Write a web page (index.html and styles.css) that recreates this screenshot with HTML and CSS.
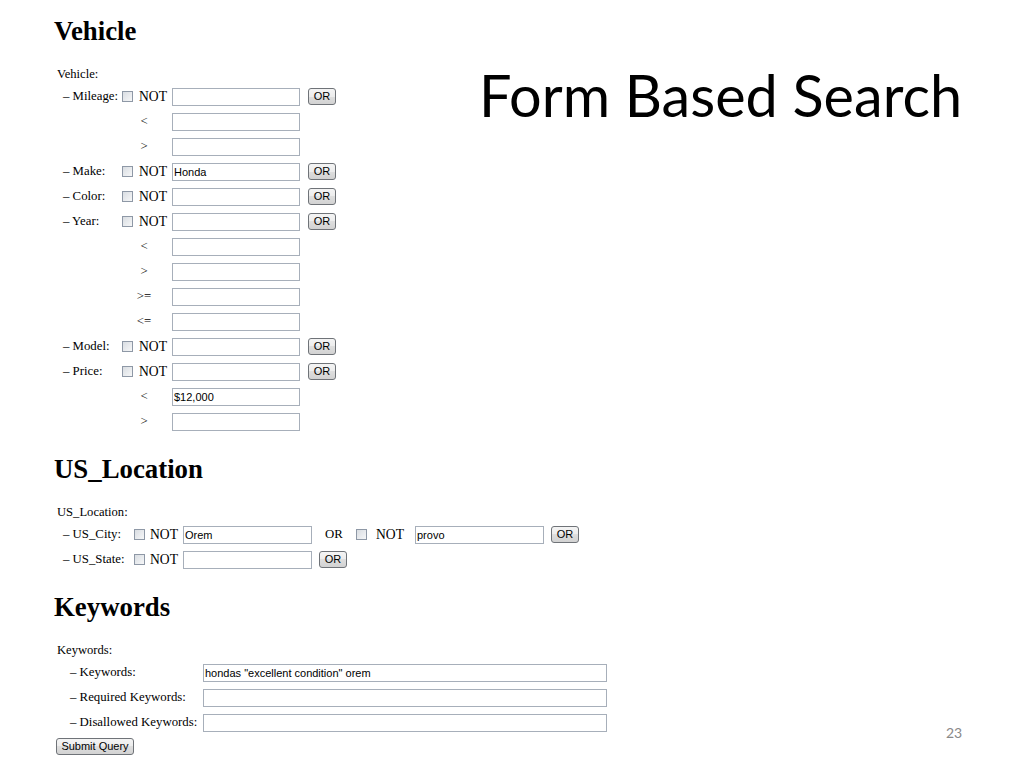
FILE: index.html
```html
<html>
    <meta http-equiv="content-type" content="text/html; charset=utf-8" />
    <head>
        <link rel="stylesheet" href="styles.css">
        <title>Form Based Search</title>
    </head>
    <body>
        <div class="slide">
            <form class="qform">
                <h2>Vehicle</h2>
                <div class="group-label">Vehicle:</div>
                <div class="rows">
                    <div class="row"><span class="lbl v">&ndash; Mileage:</span><input type="checkbox" class="chk"><span class="not v">NOT</span><input type="text" class="txt"><input type="button" class="btn or v" value="OR"></div>
                    <div class="row"><span class="lbl v"></span><span class="op">&lt;</span><input type="text" class="txt"></div>
                    <div class="row"><span class="lbl v"></span><span class="op">&gt;</span><input type="text" class="txt"></div>
                    <div class="row"><span class="lbl v">&ndash; Make:</span><input type="checkbox" class="chk"><span class="not v">NOT</span><input type="text" class="txt" value="Honda"><input type="button" class="btn or v" value="OR"></div>
                    <div class="row"><span class="lbl v">&ndash; Color:</span><input type="checkbox" class="chk"><span class="not v">NOT</span><input type="text" class="txt"><input type="button" class="btn or v" value="OR"></div>
                    <div class="row"><span class="lbl v">&ndash; Year:</span><input type="checkbox" class="chk"><span class="not v">NOT</span><input type="text" class="txt"><input type="button" class="btn or v" value="OR"></div>
                    <div class="row"><span class="lbl v"></span><span class="op">&lt;</span><input type="text" class="txt"></div>
                    <div class="row"><span class="lbl v"></span><span class="op">&gt;</span><input type="text" class="txt"></div>
                    <div class="row"><span class="lbl v"></span><span class="op">&gt;=</span><input type="text" class="txt"></div>
                    <div class="row"><span class="lbl v"></span><span class="op">&lt;=</span><input type="text" class="txt"></div>
                    <div class="row"><span class="lbl v">&ndash; Model:</span><input type="checkbox" class="chk"><span class="not v">NOT</span><input type="text" class="txt"><input type="button" class="btn or v" value="OR"></div>
                    <div class="row"><span class="lbl v">&ndash; Price:</span><input type="checkbox" class="chk"><span class="not v">NOT</span><input type="text" class="txt"><input type="button" class="btn or v" value="OR"></div>
                    <div class="row"><span class="lbl v"></span><span class="op">&lt;</span><input type="text" class="txt" value="$12,000"></div>
                    <div class="row"><span class="lbl v"></span><span class="op">&gt;</span><input type="text" class="txt"></div>
                </div>

                <h2>US_Location</h2>
                <div class="group-label">US_Location:</div>
                <div class="rows">
                    <div class="row"><span class="lbl us">&ndash; US_City:</span><input type="checkbox" class="chk us"><span class="not us">NOT</span><input type="text" class="txt us" value="Orem"><span class="or-text">OR</span><input type="checkbox" class="chk us2"><span class="not us2">NOT</span><input type="text" class="txt us" value="provo"><input type="button" class="btn or us" value="OR"></div>
                    <div class="row"><span class="lbl us">&ndash; US_State:</span><input type="checkbox" class="chk us"><span class="not us">NOT</span><input type="text" class="txt us"><input type="button" class="btn or us" value="OR"></div>
                </div>

                <h2>Keywords</h2>
                <div class="group-label">Keywords:</div>
                <div class="rows kw">
                    <div class="row"><span class="lbl kw">&ndash; Keywords:</span><input type="text" class="txt kw" value="hondas &quot;excellent condition&quot; orem"></div>
                    <div class="row"><span class="lbl kw">&ndash; Required Keywords:</span><input type="text" class="txt kw"></div>
                    <div class="row"><span class="lbl kw">&ndash; Disallowed Keywords:</span><input type="text" class="txt kw"></div>
                </div>
                <input type="button" class="btn submit" value="Submit Query">
            </form>

            <div class="slide-title">Form Based Search</div>
            <div class="slide-num">23</div>
        </div>
    </body>
</html>
```

FILE: styles.css
```css
/* slide with a screenshot of the query form on the left */
body {
    margin: 0;
    background: #ffffff;
}
.slide {
    position: relative;
    width: 1024px;
    height: 768px;
    overflow: hidden;
    font-family: "Liberation Serif", "Times New Roman", serif;
    color: #000000;
}
.qform {
    margin: 0;
    padding: 18px 0 0 54px;
}
.qform h2 {
    margin: 0 0 22px 0;
    font-size: 26.8px;
    line-height: 26px;
    font-weight: bold;
}
.group-label {
    font-size: 12.6px;
    line-height: 16px;
    padding-left: 3px;
    height: 16px;
}
.rows {
    padding: 2px 0 0 9px;
    margin-bottom: 22px;
}
.rows.kw {
    padding-left: 16px;
    margin-bottom: 3px;
}
.row {
    display: flex;
    align-items: center;
    height: 25px;
    font-size: 12.8px;
}
.lbl {
    flex: none;
    white-space: nowrap;
}
.lbl.v {
    width: 59px;
}
.lbl.us {
    width: 71px;
}
.lbl.kw {
    width: 133px;
}
.chk {
    -webkit-appearance: none;
    appearance: none;
    flex: none;
    width: 11px;
    height: 11px;
    margin: 0 6px 0 0;
    border: 1px solid #8e98a6;
    background: linear-gradient(135deg, #d9dde2, #f6f7f8);
    box-sizing: border-box;
}
.chk.us {
    margin-right: 5px;
}
.chk.us2 {
    margin: 0 9px 0 13px;
}
.not {
    flex: none;
    width: 33px;
    font-size: 13.6px;
}
.not.us2 {
    width: 39px;
}
.op {
    flex: none;
    width: 44px;
    padding-right: 6px;
    text-align: center;
}
.txt {
    flex: none;
    width: 128px;
    height: 18px;
    margin: 0;
    padding: 0 1px;
    border: 1px solid #a7afba;
    box-sizing: border-box;
    font-family: "Liberation Sans", Arial, sans-serif;
    font-size: 11px;
    color: #000000;
    background: #ffffff;
    outline: none;
}
.txt.us {
    width: 129px;
}
.txt.kw {
    width: 404px;
}
.or-text {
    margin-left: 13px;
    width: 18px;
}
.btn {
    flex: none;
    height: 17px;
    margin: 0;
    padding: 0;
    border: 1px solid #6f7378;
    border-radius: 3px;
    background: linear-gradient(#f4f4f4, #ececec 50%, #dedede 50%, #d2d2d2);
    font-family: "Liberation Sans", Arial, sans-serif;
    font-size: 11px;
    line-height: 15px;
    color: #000000;
    box-sizing: border-box;
}
.btn.or {
    width: 28px;
}
.btn.or.v {
    margin-left: 8px;
}
.btn.or.us {
    margin-left: 7px;
}
.btn.submit {
    width: 78px;
    margin-left: 2px;
}
.slide-title {
    position: absolute;
    left: 479px;
    top: 61px;
    font-family: Lato, "Open Sans", sans-serif;
    font-size: 57.6px;
    line-height: 68px;
    white-space: nowrap;
}
.slide-num {
    position: absolute;
    left: 946px;
    top: 724px;
    font-family: Lato, "Open Sans", sans-serif;
    font-size: 14px;
    line-height: 18px;
    color: #898989;
}
```
